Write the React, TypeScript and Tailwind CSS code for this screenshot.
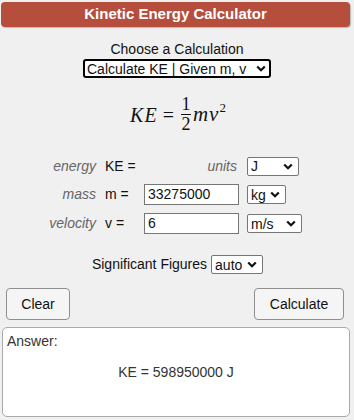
import { useState } from "react"

const Chevron = () => (
  <svg width="10" height="7" viewBox="0 0 10 7" className="shrink-0">
    <path d="M1.2 1.5 L5 5.2 L8.8 1.5" fill="none" stroke="#111" strokeWidth="2.2" />
  </svg>
)

const FakeSelect = ({ value, width }: { value: string; width: string }) => (
  <div className={`flex h-[19px] items-center justify-between rounded-[2px] border border-[#767676] bg-white pl-[3px] pr-[5px] ${width}`}>
    <span className="leading-none">{value}</span>
    <Chevron />
  </div>
)

const App = () => {
  const [mass, setMass] = useState("33275000")
  const [vel, setVel] = useState("6")

  return (
    <div className="h-[420px] w-[354px] bg-[#f0f0f0] text-[14px] text-[#111] [font-family:'Liberation_Sans',Arial,sans-serif]">
      <div className="pl-[1px] pr-[4px] pt-[2px]">
        <div className="flex h-[25px] items-center justify-center rounded-[4px] bg-[#b54e3c] text-[15px] font-bold text-white shadow-[1px_1px_1px_#bbb]">
          Kinetic Energy Calculator
        </div>
      </div>

      <div className="mt-[14px] flex flex-col items-center">
        <div className="leading-[17px]">Choose a Calculation</div>
        <div className="mt-[1px] flex h-[19px] w-[188px] items-center justify-between rounded-[3px] border-2 border-black bg-white pl-[2px] pr-[3px]">
          <span className="leading-none">Calculate KE | Given m, v</span>
          <Chevron />
        </div>
      </div>

      {/* formula */}
      <div className="mt-[18px] flex items-center justify-center pl-[2px] text-[20px] [font-family:'Liberation_Serif','Times_New_Roman',serif]">
        <span className="italic tracking-[1px]">KE</span>
        <span className="ml-[5px] mr-[7px]">=</span>
        <span className="flex flex-col items-center text-[18px] leading-[17px]">
          <span>1</span>
          <span className="my-[1px] h-[1px] w-[10px] bg-[#111]" />
          <span>2</span>
        </span>
        <span className="ml-[2px] italic tracking-[1px] text-[21px]">mv</span>
        <span className="-mt-[13px] text-[13px]">2</span>
      </div>

      <div className="mt-[23px] flex flex-col gap-[8px]">
        <div className="flex h-[20px] items-center">
          <span className="w-[96px] text-right italic text-[#666]">energy</span>
          <span className="ml-[9px] w-[39px]">KE =</span>
          <span className="w-[94px] pr-[1px] text-right italic text-[#666]">units</span>
          <div className="ml-[9px]">
            <FakeSelect value="J" width="w-[52px]" />
          </div>
        </div>
        <div className="flex h-[21px] items-center">
          <span className="w-[96px] text-right italic text-[#666]">mass</span>
          <span className="ml-[9px] w-[39px]">m =</span>
          <input
            value={mass}
            onChange={(e) => setMass(e.target.value)}
            className="h-[21px] w-[95px] border border-[#767676] bg-white px-[3px] text-[14px] outline-none"
          />
          <div className="ml-[8px]">
            <FakeSelect value="kg" width="w-[39px]" />
          </div>
        </div>
        <div className="flex h-[21px] items-center">
          <span className="w-[96px] text-right italic text-[#666]">velocity</span>
          <span className="ml-[9px] w-[39px]">v =</span>
          <input
            value={vel}
            onChange={(e) => setVel(e.target.value)}
            className="h-[21px] w-[95px] border border-[#767676] bg-white px-[3px] text-[14px] outline-none"
          />
          <div className="ml-[8px]">
            <FakeSelect value="m/s" width="w-[55px]" />
          </div>
        </div>
      </div>

      <div className="mt-[20px] flex items-center justify-center gap-[4px] pl-[1px]">
        <span>Significant Figures</span>
        <FakeSelect value="auto" width="w-[52px]" />
      </div>

      <div className="mt-[13px] flex justify-between pl-[6px] pr-[10px]">
        <button className="h-[32px] w-[64px] rounded-[4px] border border-[#8f8f8f] bg-[#f5f5f5]">Clear</button>
        <button className="h-[32px] w-[90px] rounded-[4px] border border-[#8f8f8f] bg-[#f5f5f5]">Calculate</button>
      </div>

      <div className="ml-[2px] mr-[4px] mt-[7px] h-[90px] rounded-[5px] border border-[#aaa] bg-white text-[#333]">
        <div className="pl-[4px] pt-[3px]">Answer:</div>
        <div className="mt-[10px] text-center">KE = 598950000 J</div>
      </div>
    </div>
  )
}

export default App
